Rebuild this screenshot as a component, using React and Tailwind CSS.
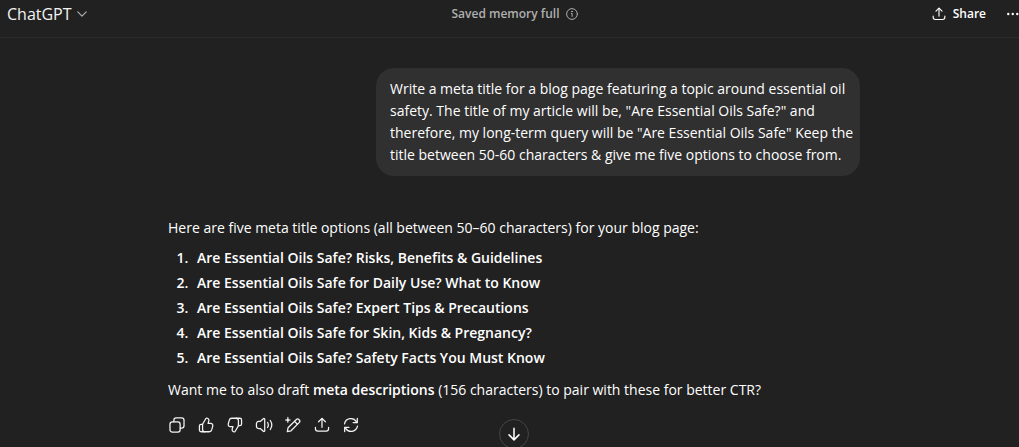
import { clsx } from 'clsx';

const options = [
  'Are Essential Oils Safe? Risks, Benefits & Guidelines',
  'Are Essential Oils Safe for Daily Use? What to Know',
  'Are Essential Oils Safe? Expert Tips & Precautions',
  'Are Essential Oils Safe for Skin, Kids & Pregnancy?',
  'Are Essential Oils Safe? Safety Facts You Must Know',
];

const prompt = `Write a meta title for a blog page featuring a topic around essential oil
safety. The title of my article will be, "Are Essential Oils Safe?" and
therefore, my long-term query will be "Are Essential Oils Safe" Keep the
title between 50-60 characters & give me five options to choose from.`;

const Icon = ({ children, className = 'size-[18px]' }) => (
  <svg
    className={clsx('shrink-0', className)}
    viewBox="0 0 20 20"
    fill="none"
    stroke="currentColor"
    strokeWidth="1.4"
    strokeLinecap="round"
    strokeLinejoin="round"
    aria-hidden="true"
  >
    {children}
  </svg>
);

const uploadPaths = (
  <>
    <path d="M10 12.6V2.8" />
    <path d="M6.2 6.4L10 2.6l3.8 3.8" />
    <path d="M2.7 12.6v1.5a2.7 2.7 0 0 0 2.7 2.7h9.2a2.7 2.7 0 0 0 2.7-2.7v-1.5" />
  </>
);

const thumbPaths = (
  <>
    <path d="M6.2 9.2L9.7 3c.3-.5.8-.7 1.4-.6 1.5.2 2.4 1.6 2 3.1L12.3 8.2h2.9c1.6 0 2.7 1.5 2.3 3l-1.2 4.3c-.3 1.2-1.4 2-2.7 2H8.8c-1.5 0-2.6-1.2-2.6-2.6z" />
    <path d="M6.2 9.2H4.6c-1.1 0-1.9.9-1.9 1.9v4.4c0 1.1.8 2 1.9 2h4" />
  </>
);

const actions = [
  {
    label: 'Copy',
    icon: (
      <>
        <rect x="2.2" y="6.5" width="11.3" height="11.3" rx="2.6" />
        <path d="M6.5 6.4V4.8a2.6 2.6 0 0 1 2.6-2.6h6.1a2.6 2.6 0 0 1 2.6 2.6v6.1a2.6 2.6 0 0 1-2.6 2.6h-1.6" />
      </>
    ),
  },
  { label: 'Good response', icon: thumbPaths },
  { label: 'Bad response', icon: <g transform="rotate(180 10 10)">{thumbPaths}</g> },
  {
    label: 'Read aloud',
    icon: (
      <>
        <path d="M10.8 3.7v12.6c0 .8-.9 1.2-1.5.7l-3.5-3.1H4a2.4 2.4 0 0 1-2.4-2.4v-3A2.4 2.4 0 0 1 4 6.1h1.8L9.3 3c.6-.5 1.5-.1 1.5.7z" />
        <path d="M14 7.2c1 1.7 1 3.9 0 5.6M17 5c2 3 2 7 0 10" />
      </>
    ),
  },
  {
    label: 'Edit in canvas',
    icon: (
      <>
        <path d="M3.7 17.3l.8-4.2 9-9a2.3 2.3 0 0 1 3.3 3.3l-9 9z" />
        <path d="M11.7 6l3.2 3.2" />
        <path d="M4.3 1.5c.3 2 1 2.7 3 3-2 .3-2.7 1-3 3-.3-2-1-2.7-3-3 2-.3 2.7-1 3-3z" fill="currentColor" strokeWidth=".6" />
      </>
    ),
  },
  { label: 'Share response', icon: uploadPaths },
  {
    label: 'Try again',
    icon: (
      <>
        <path d="M2.8 8.7A7.2 7.2 0 0 1 16 6.3l.7 1" />
        <path d="M17 2.7v4.6h-4.6" />
        <path d="M17.2 11.3A7.2 7.2 0 0 1 4 13.7l-.7-1" />
        <path d="M3 17.3v-4.6h4.6" />
      </>
    ),
  },
];

const Header = () => (
  <header className="grid h-[38px] shrink-0 grid-cols-[1fr_auto_1fr] items-center border-b border-[#2c2c2c] pr-1 pb-[10px] pl-[7px]">
    <button className="flex items-center gap-1 justify-self-start text-base leading-6 text-[#f3f3f3]">
      ChatGPT
      <Icon className="size-3 text-[#afafaf]">
        <path d="M3 6.5l7 7 7-7" strokeWidth="2" />
      </Icon>
    </button>
    <button className="flex items-center gap-[6px] text-xs leading-5 font-semibold text-[#afafaf]">
      Saved memory full
      <Icon className="size-[14px]">
        <circle cx="10" cy="10" r="7.7" />
        <path d="M9 9.3h1.2v4.2" />
        <circle cx="10" cy="6.5" r=".6" fill="currentColor" />
      </Icon>
    </button>
    <div className="flex items-center gap-5 justify-self-end">
      <button className="flex items-center gap-[6px] text-xs leading-5 font-semibold">
        <Icon className="size-4">{uploadPaths}</Icon>
        Share
      </button>
      <button aria-label="More options">
        <Icon>
          <g fill="currentColor" stroke="none">
            <circle cx="2.5" cy="10" r="1.3" />
            <circle cx="7.5" cy="10" r="1.3" />
            <circle cx="12.5" cy="10" r="1.3" />
          </g>
        </Icon>
      </button>
    </div>
  </header>
);

const App = () => {
  return (
    <div className="h-screen overflow-hidden bg-[#212121] font-['Open_Sans','Noto_Sans',sans-serif] text-sm text-white">
      {/* the page runs on under the window's right edge */}
      <div className="relative -mr-[9px] flex h-full flex-col">
        <Header />

        <main className="mx-auto w-full max-w-[692px] pt-[30px]">
          <div className="ml-auto max-w-[484px] rounded-[18px] bg-[#303030] py-[10px] pl-[14px]">
            <p className="leading-[22px] whitespace-pre">{prompt}</p>
          </div>

          <article className="mt-10">
            <p className="leading-6">
              Here are five meta title options (all between 50–60 characters) for your blog page:
            </p>
            <ol className="mt-[5px] list-decimal pl-6 font-semibold">
              {options.map((option) => (
                <li key={option} className="pl-[5px] leading-[25px]">
                  {option}
                </li>
              ))}
            </ol>
            <p className="mt-2 leading-6">
              Want me to also draft <strong className="font-semibold">meta descriptions</strong> (156 characters) to pair with these for better CTR?
            </p>
          </article>

          <div className="mt-2 -ml-[6px] flex">
            {actions.map(({ label, icon }) => (
              <button key={label} aria-label={label} className="flex h-[29px] w-[29px] items-center justify-center text-[#f3f3f3]">
                <Icon>{icon}</Icon>
              </button>
            ))}
          </div>
        </main>

        <button
          aria-label="Scroll to bottom"
          className="absolute -bottom-[2px] left-1/2 flex size-[30px] -translate-x-1/2 items-center justify-center rounded-full border border-[#454545] bg-[#212121]"
        >
          <Icon>
            <path d="M10 3.5v13M4.5 11l5.5 5.5 5.5-5.5" strokeWidth="1.7" />
          </Icon>
        </button>
      </div>
    </div>
  );
};

export default App;
